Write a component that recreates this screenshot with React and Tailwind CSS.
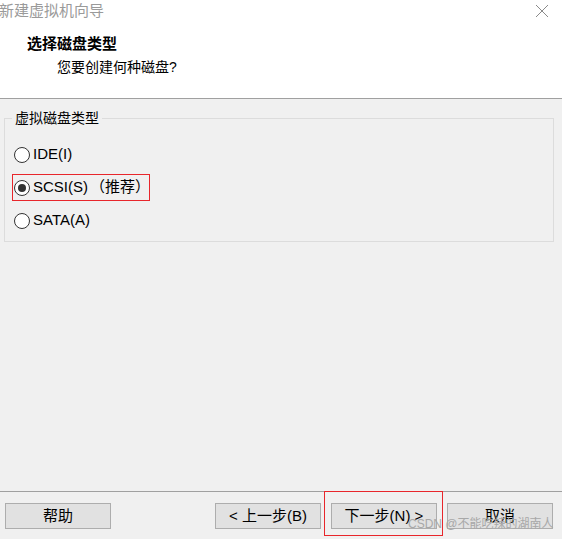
import React from 'react'

const FONT = { fontFamily: '"Segoe UI", "Liberation Sans", "Noto Sans CJK SC", sans-serif' }

const OPTIONS = [
  { id: 'ide', label: 'IDE(I)' },
  { id: 'scsi', label: 'SCSI(S)', note: '（推荐）', checked: true },
  { id: 'sata', label: 'SATA(A)' },
]

function Radio({ checked }) {
  return (
    <span className="w-[16px] h-[16px] rounded-full border border-[#333333] bg-white flex items-center justify-center shrink-0">
      {checked && <span className="w-[8px] h-[8px] rounded-full bg-[#333333]" />}
    </span>
  )
}

function WinButton({ children }) {
  return (
    <button className="w-[106px] h-[26px] bg-[#e1e1e1] border border-[#adadad] text-[15px] text-black flex items-center justify-center">
      {children}
    </button>
  )
}

export default function App() {
  return (
    <div className="relative w-[562px] h-[539px] bg-[#f0f0f0] flex flex-col overflow-hidden" style={FONT}>

      {/* 顶部白色区域 */}
      <div className="h-[99px] bg-white border-b border-[#a0a0a0] shrink-0 flex flex-col">
        <div className="h-[21px] flex items-center justify-between pr-[13px]">
          <span className="text-[15px] text-[#9a9a9a] leading-none -ml-[1px]">新建虚拟机向导</span>
          <svg width="14" height="14" viewBox="0 0 14 14">
            <path d="M1 1 L13 13 M13 1 L1 13" stroke="#8a8a8a" strokeWidth="1" />
          </svg>
        </div>
        <div className="pl-[27px] pt-[15px] text-[15px] font-bold text-black leading-none">选择磁盘类型</div>
        <div className="pl-[57px] pt-[9px] text-[14px] text-black leading-none">您要创建何种磁盘?</div>
      </div>

      {/* 主体 */}
      <div className="flex-1 px-[4px] pt-[10px]">
        <fieldset className="h-[133px] border border-[#dcdcdc] mr-[4px] px-[6px]">
          <legend className="px-[3px] ml-[1px] text-[14px] text-black leading-[18px]">虚拟磁盘类型</legend>
          <div className="flex flex-col pt-[14px] gap-[6px]">
            {OPTIONS.map(opt => (
              <div
                key={opt.id}
                className={`w-[138px] h-[27px] ml-[1px] pl-[1px] flex items-center gap-[3px] text-[15px] text-black border ${opt.checked ? 'border-[#e8262b]' : 'border-transparent'}`}
              >
                <Radio checked={opt.checked} />
                <span className="whitespace-nowrap">{opt.label}</span>
                {opt.note && <span className="-ml-[1px] whitespace-nowrap">{opt.note}</span>}
              </div>
            ))}
          </div>
        </fieldset>
      </div>

      {/* 底部按钮 */}
      <div className="h-[48px] border-t border-[#a0a0a0] shrink-0 flex items-start pt-[11px] pl-[5px] pr-[9px]">
        <WinButton>帮助</WinButton>
        <div className="flex-1" />
        <div className="flex gap-[10px]">
          <WinButton>&lt; 上一步(B)</WinButton>
          <WinButton>下一步(N) &gt;</WinButton>
          <WinButton>取消</WinButton>
        </div>
      </div>

      {/* 标注框 */}
      <div className="absolute left-[324px] top-[491px] w-[119px] h-[45px] border border-[#e8262b] pointer-events-none" />

      {/* 水印 */}
      <div className="absolute left-[408px] top-[515px] text-[12px] text-[#a8a8a8] pointer-events-none whitespace-nowrap">
        CSDN @不能吃辣的湖南人
      </div>
    </div>
  )
}
